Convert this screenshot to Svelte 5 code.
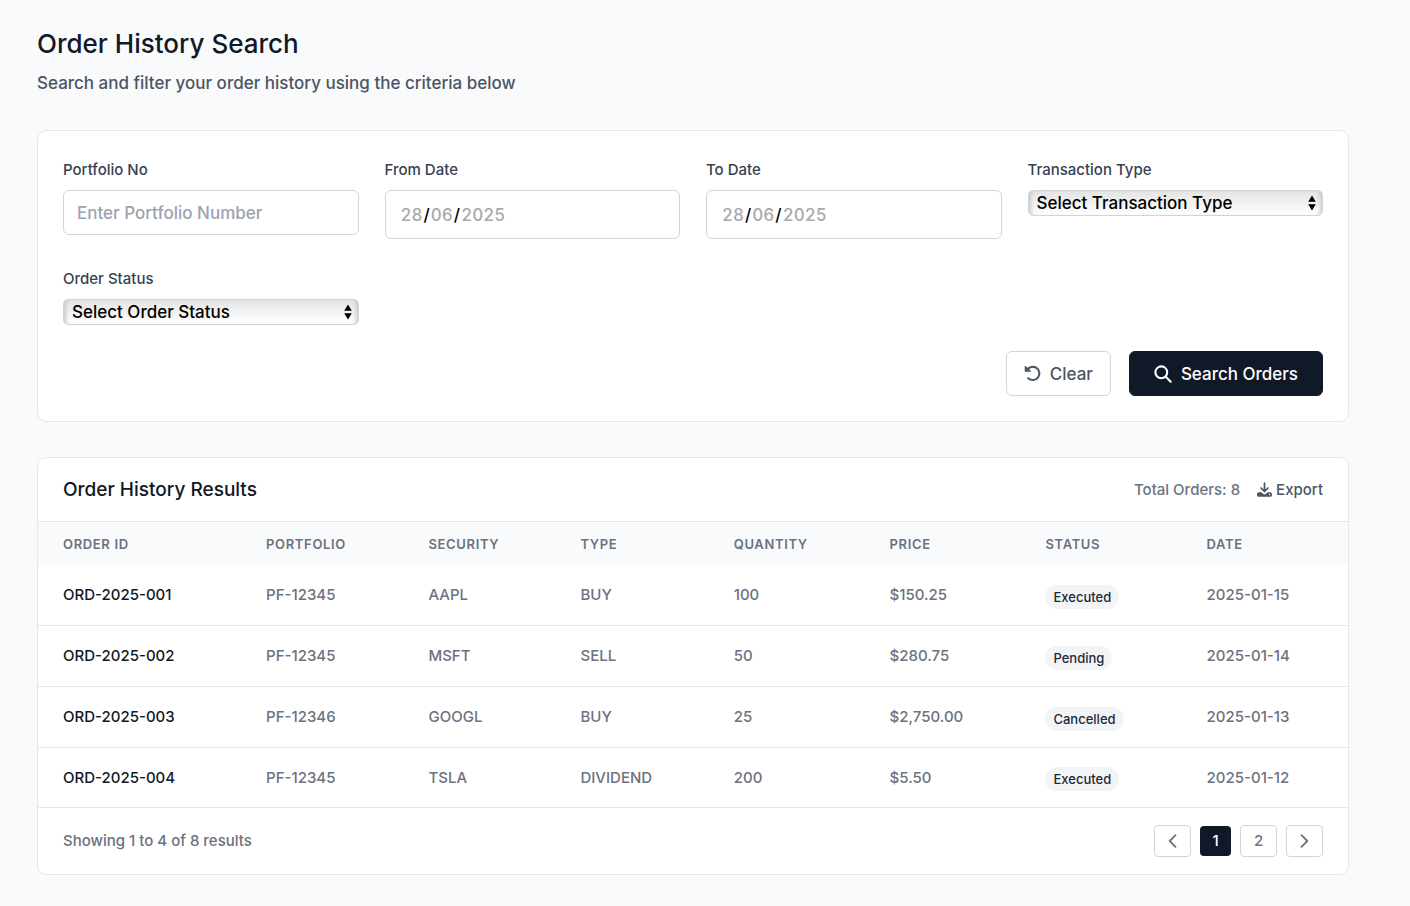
<script>
  let portfolio = $state('');
  let fromDate = $state('2025-06-28');
  let toDate = $state('2025-06-28');
  let transactionType = $state('');
  let orderStatus = $state('');
  let page = $state(1);

  const total = 8;
  const columns = [
    ['Order ID', 15.5],
    ['Portfolio', 12.4],
    ['Security', 11.6],
    ['Type', 11.7],
    ['Quantity', 11.9],
    ['Price', 11.9],
    ['Status', 12.3],
    ['Date', 12.7]
  ];
  const orders = [
    { id: 'ORD-2025-001', portfolio: 'PF-12345', security: 'AAPL', type: 'BUY', quantity: '100', price: '$150.25', status: 'Executed', date: '2025-01-15' },
    { id: 'ORD-2025-002', portfolio: 'PF-12345', security: 'MSFT', type: 'SELL', quantity: '50', price: '$280.75', status: 'Pending', date: '2025-01-14' },
    { id: 'ORD-2025-003', portfolio: 'PF-12346', security: 'GOOGL', type: 'BUY', quantity: '25', price: '$2,750.00', status: 'Cancelled', date: '2025-01-13' },
    { id: 'ORD-2025-004', portfolio: 'PF-12345', security: 'TSLA', type: 'DIVIDEND', quantity: '200', price: '$5.50', status: 'Executed', date: '2025-01-12' }
  ];

  function parts(value) {
    const [y, m, d] = (value || 'yyyy-mm-dd').split('-');
    return [d, m, y];
  }

  function clear() {
    portfolio = '';
    transactionType = '';
    orderStatus = '';
  }
</script>

{#snippet dateText(value)}
  {@const [d, m, y] = parts(value)}
  <span class="date-text" aria-hidden="true"><span>{d}</span><b>/</b><span>{m}</span><b>/</b><span>{y}</span></span>
{/snippet}

{#snippet arrows()}
  <svg class="arrows" width="8" height="16" viewBox="0 0 8 16" aria-hidden="true">
    <path d="M4 0.5 7.8 6.7H.2zM4 15.5.2 9.3h7.6z" fill="#000" />
  </svg>
{/snippet}

<main>
  <header class="intro">
    <h1>Order History Search</h1>
    <p>Search and filter your order history using the criteria below</p>
  </header>

  <form class="card filters" onsubmit={(e) => e.preventDefault()}>
    <div class="fields">
      <div class="field">
        <label for="portfolio">Portfolio No</label>
        <input id="portfolio" class="text" type="text" placeholder="Enter Portfolio Number" bind:value={portfolio} />
      </div>
      <div class="field">
        <label for="from">From Date</label>
        <div class="stack">
          <input id="from" class="date" type="date" bind:value={fromDate} />
          {@render dateText(fromDate)}
        </div>
      </div>
      <div class="field">
        <label for="to">To Date</label>
        <div class="stack">
          <input id="to" class="date" type="date" bind:value={toDate} />
          {@render dateText(toDate)}
        </div>
      </div>
      <div class="field">
        <label for="type">Transaction Type</label>
        <div class="stack">
          <select id="type" bind:value={transactionType}>
            <option value="">Select Transaction Type</option>
            <option value="BUY">BUY</option>
            <option value="SELL">SELL</option>
            <option value="DIVIDEND">DIVIDEND</option>
          </select>
          {@render arrows()}
        </div>
      </div>
      <div class="field">
        <label for="status">Order Status</label>
        <div class="stack">
          <select id="status" bind:value={orderStatus}>
            <option value="">Select Order Status</option>
            <option value="Executed">Executed</option>
            <option value="Pending">Pending</option>
            <option value="Cancelled">Cancelled</option>
          </select>
          {@render arrows()}
        </div>
      </div>
    </div>
    <div class="actions">
      <button type="button" class="btn clear" onclick={clear}>
        <svg width="17" height="17" viewBox="0 0 17 17" fill="none" aria-hidden="true">
          <path d="M3 5.3A6.6 6.6 0 1 1 4.2 13.2" stroke="currentColor" stroke-width="2.1" stroke-linecap="round" />
          <path d="M.7 1.6c0-.6.7-.8 1.1-.4l5 4.600c.4.4.1 1-.4 1H1.300c-.4 0-.6-.3-.6-.6z" fill="currentColor" />
        </svg>
        Clear
      </button>
      <button type="submit" class="btn search">
        <svg width="18" height="18" viewBox="0 0 18 18" fill="none" stroke="currentColor" stroke-width="2.1" stroke-linecap="round" aria-hidden="true">
          <circle cx="7.3" cy="7.3" r="5.9" />
          <path d="m11.8 11.8 4.9 4.9" />
        </svg>
        Search Orders
      </button>
    </div>
  </form>

  <section class="card results">
    <div class="bar">
      <h2>Order History Results</h2>
      <div class="tools">
        <span class="total">Total Orders: {total}</span>
        <button type="button" class="export">
          <svg width="15" height="15" viewBox="0 0 15 15" aria-hidden="true">
            <path d="M7.5 1v8M4 6l3.5 3.5L11 6" fill="none" stroke="currentColor" stroke-width="1.7" stroke-linecap="round" stroke-linejoin="round" />
            <path fill-rule="evenodd" d="M1.9 10.3h2.5l1.7 1.5a2 2 0 0 0 2.8 0l1.7-1.5h2.5a1.9 1.9 0 0 1 1.9 1.9v.7a1.9 1.9 0 0 1-1.9 1.9H1.9A1.9 1.9 0 0 1 0 12.9v-.7a1.9 1.9 0 0 1 1.9-1.9zM12.5 11.8a.7.7 0 1 0 0 1.4.7.7 0 0 0 0-1.4z" fill="currentColor" />
          </svg>
          Export
        </button>
      </div>
    </div>
    <table>
      <colgroup>
        {#each columns as [name, width] (name)}<col style="width: {width}%" />{/each}
      </colgroup>
      <thead>
        <tr>{#each columns as [name] (name)}<th scope="col">{name}</th>{/each}</tr>
      </thead>
      <tbody>
        {#each orders as o (o.id)}
          <tr>
            <td class="id">{o.id}</td>
            <td>{o.portfolio}</td>
            <td>{o.security}</td>
            <td>{o.type}</td>
            <td>{o.quantity}</td>
            <td>{o.price}</td>
            <td class="state"><span class="badge">{o.status}</span></td>
            <td>{o.date}</td>
          </tr>
        {/each}
      </tbody>
    </table>
    <div class="foot">
      <span>Showing 1 to 4 of {total} results</span>
      <nav aria-label="Pagination">
        <button type="button" aria-label="Previous page" onclick={() => (page = 1)}>
          <svg width="9" height="14" viewBox="0 0 9 14" aria-hidden="true"><path d="M7.5 1.2 1.7 7l5.8 5.8" /></svg>
        </button>
        {#each [1, 2] as n (n)}
          <button type="button" class:current={page === n} onclick={() => (page = n)}>{n}</button>
        {/each}
        <button type="button" aria-label="Next page" onclick={() => (page = 2)}>
          <svg width="9" height="14" viewBox="0 0 9 14" aria-hidden="true"><path d="M1.5 1.2 7.3 7l-5.8 5.8" /></svg>
        </button>
      </nav>
    </div>
  </section>
</main>

<style>
  :global(body) {
    margin: 0;
    background: #f9fafb;
  }

  main {
    padding: 26px 61px 31px 37px;
    color: #111827;
    font: 500 15px/22px Inter, sans-serif;
    -webkit-font-smoothing: antialiased;
  }

  main, main * {
    box-sizing: border-box;
  }

  button, input, select {
    margin: 0;
    font: inherit;
  }

  button {
    cursor: pointer;
  }

  h1, h2, p {
    margin: 0;
  }

  .intro {
    margin-bottom: 34px;
  }

  h1 {
    font-size: 26px;
    line-height: 35px;
    font-weight: 500;
  }

  .intro p {
    margin-top: 9px;
    font-size: 17px;
    line-height: 26px;
    color: #4b5563;
  }

  .card {
    background: #fff;
    border: 1px solid #e5e7eb;
    border-radius: 9px;
  }

  .filters {
    padding: 26px 25px 25px;
    margin-bottom: 35px;
  }

  .fields {
    display: grid;
    grid-template-columns: repeat(4, minmax(0, 1fr));
    gap: 27px 26px;
    align-items: start;
  }

  label {
    display: block;
    margin-bottom: 7px;
    line-height: 26px;
    color: #374151;
  }

  .text, .date {
    width: 100%;
    background: #fff;
    border: 1px solid #d1d5db;
    border-radius: 6px;
    font-size: 17px;
    color: #111827;
  }

  .text {
    display: block;
    height: 45px;
    padding: 0 13px;
  }

  .text::placeholder {
    color: #9ca3af;
    opacity: 1;
  }

  .stack {
    display: grid;
    align-items: center;
  }

  .stack > :global(*) {
    grid-area: 1 / 1;
  }

  .date {
    height: 49px;
    padding: 0 16px;
    color: transparent;
  }

  .date::-webkit-calendar-picker-indicator {
    opacity: 0;
  }

  .date-text {
    display: flex;
    padding-left: 15px;
    font-size: 17px;
    pointer-events: none;
    color: #a9a9a9;
    font-variant-numeric: tabular-nums;
  }

  .date-text span {
    padding: 0 1px;
  }

  .date-text b {
    font-weight: 500;
    color: #000;
  }

  select {
    appearance: none;
    width: 100%;
    height: 26px;
    padding: 0 26px 0 8px;
    border: 1px solid #d1d5db;
    border-radius: 5px;
    background: linear-gradient(#e4e4e4, #fff);
    box-shadow: inset 5px 0 5px -4px #bbb, inset -5px 0 5px -4px #bbb;
    font-size: 17px;
    line-height: 24px;
    color: #000;
  }

  .arrows {
    justify-self: end;
    margin-right: 7px;
    pointer-events: none;
  }

  .actions {
    display: flex;
    justify-content: flex-end;
    gap: 18px;
    margin-top: 26px;
  }

  .btn {
    display: flex;
    align-items: center;
    gap: 9px;
    height: 45px;
    border-radius: 6px;
    font-size: 17px;
  }

  .clear {
    padding: 0 17px;
    border: 1px solid #d1d5db;
    background: #fff;
    color: #4b5563;
  }

  .search {
    padding: 0 24px;
    border: 1px solid #111827;
    background: #111827;
    color: #fff;
  }

  .results {
    overflow: hidden;
  }

  .bar {
    display: flex;
    justify-content: space-between;
    align-items: center;
    height: 64px;
    padding: 0 25px;
    border-bottom: 1px solid #e5e7eb;
  }

  h2 {
    font-size: 19px;
    line-height: 28px;
    font-weight: 500;
  }

  .tools {
    display: flex;
    align-items: center;
    gap: 17px;
    color: #6b7280;
  }

  .export {
    display: flex;
    align-items: center;
    gap: 4px;
    padding: 0;
    border: 0;
    background: none;
    color: #4b5563;
  }

  table {
    width: 100%;
    table-layout: fixed;
    border-collapse: separate;
    border-spacing: 0;
  }

  th, td {
    padding: 0 25px;
    text-align: left;
    white-space: nowrap;
  }

  th {
    height: 43px;
    background: #f9fafb;
    font-size: 13px;
    font-weight: 600;
    letter-spacing: 0.05em;
    text-transform: uppercase;
    color: #6b7280;
  }

  td {
    height: 61px;
    border-bottom: 1px solid #e5e7eb;
    color: #6b7280;
  }

  tr:last-child td {
    height: 60px;
  }

  .id {
    color: #111827;
  }

  .state {
    padding-top: 3px;
  }

  .badge {
    display: inline-block;
    padding: 1px 8px;
    border-radius: 12px;
    background: #f3f4f6;
    font-size: 13px;
    color: #1f2937;
  }

  .foot {
    display: flex;
    justify-content: space-between;
    align-items: center;
    height: 66px;
    padding: 0 25px;
    color: #6b7280;
  }

  nav {
    display: flex;
    align-items: center;
    gap: 9px;
  }

  nav button {
    display: flex;
    align-items: center;
    justify-content: center;
    width: 37px;
    height: 32px;
    padding: 0;
    border: 1px solid #d1d5db;
    border-radius: 4px;
    background: #fff;
    color: #6b7280;
  }

  nav .current {
    width: 31px;
    height: 30px;
    border: 0;
    background: #111827;
    color: #fff;
  }

  nav path {
    fill: none;
    stroke: currentColor;
    stroke-width: 1.8;
    stroke-linecap: round;
    stroke-linejoin: round;
  }
</style>
